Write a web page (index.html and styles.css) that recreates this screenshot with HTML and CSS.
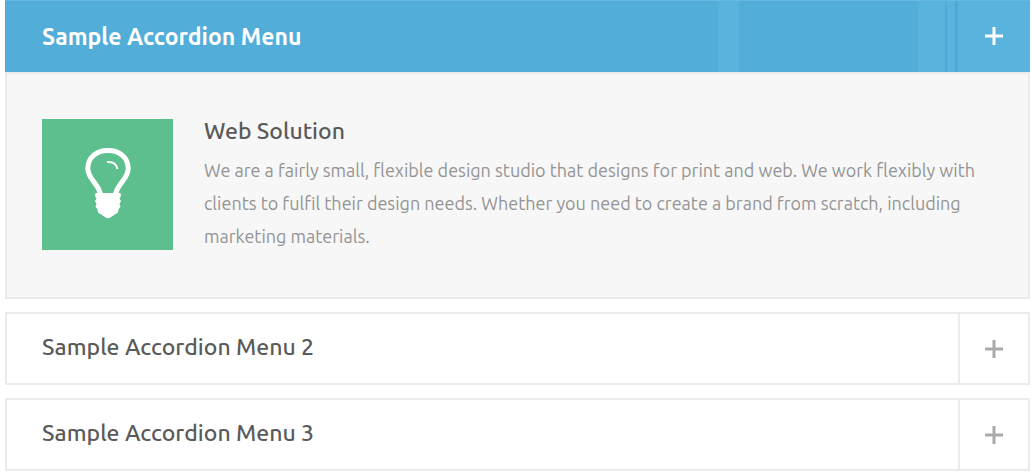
FILE: index.html
```html
<!DOCTYPE html>
<html lang="en">
<head>
<meta charset="utf-8">
<meta name="viewport" content="width=device-width, initial-scale=1">
<title>Accordion</title>
<link rel="stylesheet" href="styles.css">
</head>
<body>
<main class="accordion">
  <section class="item item-open">
    <h2 class="heading">
      <button class="toggle" type="button" aria-expanded="true" aria-controls="panel-1">
        <span class="title">Sample Accordion Menu</span>
        <span class="sign"><svg class="plus" viewBox="0 0 18 18" aria-hidden="true"><path d="M0 9h18M9 0v18"/></svg></span>
      </button>
    </h2>
    <div class="panel" id="panel-1">
      <div class="thumb">
        <svg class="bulb" viewBox="0 1 48 74" aria-hidden="true">
          <path class="glass" d="M16.500 48C15.500 37 3.800 32.500 3.800 21.500C3.800 10.500 12.500 3.500 24 3.500S44.200 10.500 44.200 21.500C44.200 32.500 32.500 37 31.500 48"/>
          <path class="shine" d="M23 15C28.500 14.500 32.500 17 33.500 22"/>
          <path class="base" d="M11.500 46H36.500L37 49L35.500 51.500L37 54L35.500 57L36.500 59.500L34.500 62.500L34 65.500L27 70Q24 72.500 21 70L14 65.500L13.500 62.500L11.500 59.500L12.500 57L11 54L12.500 51.500L11 49Z"/>
        </svg>
      </div>
      <div class="copy">
        <h3 class="subtitle">Web Solution</h3>
        <p class="text">We are a fairly small, flexible design studio that designs for print and web. We work flexibly with clients to fulfil their design needs. Whether you need to create a brand from scratch, including marketing materials.</p>
      </div>
    </div>
  </section>
  <section class="item">
    <h2 class="heading">
      <button class="toggle" type="button" aria-expanded="false">
        <span class="title">Sample Accordion Menu 2</span>
        <span class="sign"><svg class="plus" viewBox="0 0 18 18" aria-hidden="true"><path d="M0 9h18M9 0v18"/></svg></span>
      </button>
    </h2>
  </section>
  <section class="item">
    <h2 class="heading">
      <button class="toggle" type="button" aria-expanded="false">
        <span class="title">Sample Accordion Menu 3</span>
        <span class="sign"><svg class="plus" viewBox="0 0 18 18" aria-hidden="true"><path d="M0 9h18M9 0v18"/></svg></span>
      </button>
    </h2>
  </section>
</main>
</body>
</html>
```
FILE: styles.css
```css
* {
  box-sizing: border-box;
}

body {
  margin: 0;
  background: #fff;
  font-family: Ubuntu, "Noto Sans", sans-serif;
  color: #5a5a5a;
}

.accordion {
  display: flex;
  flex-direction: column;
  gap: 13px;
  padding: 0 2px 2px 5px;
}

.heading {
  margin: 0;
}

.toggle {
  display: flex;
  align-items: stretch;
  width: 100%;
  min-height: 73px;
  padding: 0;
  border: 2px solid #ebebeb;
  background: #fff;
  font: 500 23px/28px Ubuntu, "Noto Sans", sans-serif;
  color: #5a5a5a;
  text-align: left;
  cursor: pointer;
}

.title {
  flex: 1;
  align-self: center;
  padding: 0 35px 3px;
}

.sign {
  display: flex;
  align-items: center;
  justify-content: center;
  width: 70px;
  border-left: 2px solid #ebebeb;
}

.plus {
  width: 18px;
  height: 18px;
  fill: none;
  stroke: #aaa;
  stroke-width: 3;
}

.item-open .toggle {
  min-height: 72px;
  border: 0;
  border-top: 1px solid #66b8de;
  background:
    linear-gradient(#4fa9d7, #4fa9d7) right 83px top / 2px 100% no-repeat,
    linear-gradient(#5ab3dc, #5ab3dc) right 291px top / 21px 100% no-repeat,
    linear-gradient(#5ab3dc, #5ab3dc) right top / 112px 100% no-repeat,
    #53add9;
  color: #fff;
  font-weight: 700;
}

.item-open .title {
  padding: 0 37px;
}

.item-open .sign {
  width: 75px;
  padding-bottom: 1px;
  border-left: 3px solid #50a8d6;
}

.item-open .plus {
  stroke: #fff;
}

.panel {
  display: flex;
  align-items: flex-start;
  gap: 31px;
  min-height: 227px;
  padding: 45px 35px 44px;
  border: 2px solid #ebebeb;
  background: #f7f7f7;
}

.thumb {
  display: flex;
  flex: none;
  align-items: center;
  justify-content: center;
  width: 131px;
  height: 131px;
  background: #5dbf8d;
}

.bulb {
  width: 48px;
  height: 74px;
  fill: none;
  stroke: #fff;
}

.glass {
  stroke-width: 5;
}

.shine {
  stroke-width: 2;
}

.base {
  fill: #fff;
  stroke: none;
}

.copy {
  flex: 1;
}

.subtitle {
  margin: 0;
  font-size: 23px;
  font-weight: 500;
  line-height: 24px;
}

.text {
  margin: 11px 0 0;
  font-size: 18px;
  line-height: 33px;
  color: #949494;
}
```
